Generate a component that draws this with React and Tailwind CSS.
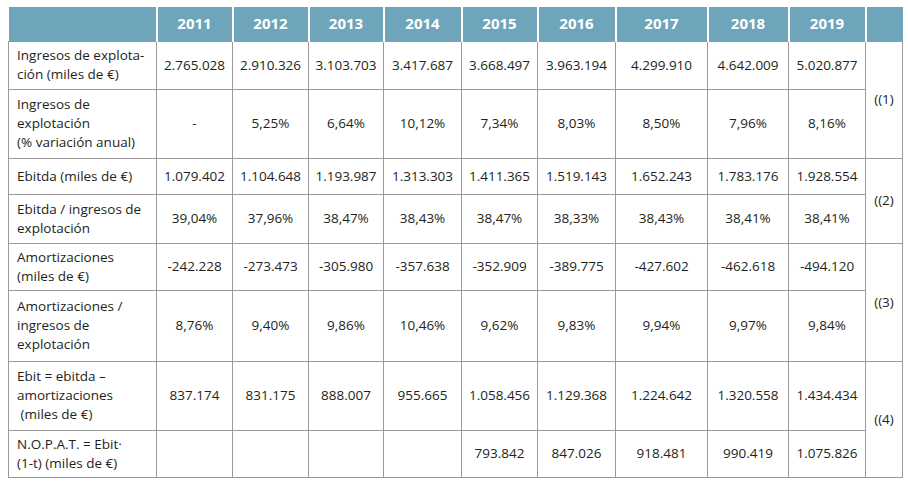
import React from 'react';

const years = ['2011', '2012', '2013', '2014', '2015', '2016', '2017', '2018', '2019'];
const colWidths = [148, 76, 76, 75, 78, 76, 78, 92, 81, 77, 37];

const rows = [
  { label: ['Ingresos de explota-', 'ción (miles de €)'], h: 48, note: '((1)', span: 2,
    values: ['2.765.028', '2.910.326', '3.103.703', '3.417.687', '3.668.497', '3.963.194', '4.299.910', '4.642.009', '5.020.877'] },
  { label: ['Ingresos de', 'explotación', '(% variación anual)'], h: 69,
    values: ['-', '5,25%', '6,64%', '10,12%', '7,34%', '8,03%', '8,50%', '7,96%', '8,16%'] },
  { label: ['Ebitda (miles de €)'], h: 36, note: '((2)', span: 2,
    values: ['1.079.402', '1.104.648', '1.193.987', '1.313.303', '1.411.365', '1.519.143', '1.652.243', '1.783.176', '1.928.554'] },
  { label: ['Ebitda / ingresos de', 'explotación'], h: 49,
    values: ['39,04%', '37,96%', '38,47%', '38,43%', '38,47%', '38,33%', '38,43%', '38,41%', '38,41%'] },
  { label: ['Amortizaciones', '(miles de €)'], h: 47, note: '((3)', span: 2,
    values: ['-242.228', '-273.473', '-305.980', '-357.638', '-352.909', '-389.775', '-427.602', '-462.618', '-494.120'] },
  { label: ['Amortizaciones /', 'ingresos de', 'explotación'], h: 71,
    values: ['8,76%', '9,40%', '9,86%', '10,46%', '9,62%', '9,83%', '9,94%', '9,97%', '9,84%'] },
  { label: ['Ebit = ebitda –', 'amortizaciones', '\u00a0(miles de €)'], h: 69, note: '((4)', span: 2,
    values: ['837.174', '831.175', '888.007', '955.665', '1.058.456', '1.129.368', '1.224.642', '1.320.558', '1.434.434'] },
  { label: ['N.O.P.A.T. = Ebit·', '(1-t) (miles de €)'], h: 47,
    values: ['', '', '', '', '793.842', '847.026', '918.481', '990.419', '1.075.826'] },
];

export default function App() {
  return (
    <div className="w-[908px] h-[481px] bg-white pt-[7px] pl-[8px] font-['Open_Sans',sans-serif] text-[13.5px] leading-[19px] text-[#231f20]">
      <table className="table-fixed border-collapse w-[894px]">
        <colgroup>
          {colWidths.map((w, i) => (
            <col key={i} style={{ width: w }} />
          ))}
        </colgroup>
        <thead>
          <tr className="h-[34px] bg-[#6fa5bb]">
            <th className="border-r-2 border-white" />
            {years.map((y) => (
              <th key={y} className="border-r-2 border-white text-white font-bold text-[15px] text-center align-middle">
                {y}
              </th>
            ))}
            <th />
          </tr>
        </thead>
        <tbody>
          {rows.map((row, i) => (
            <tr key={i} style={{ height: row.h }}>
              <td className="border border-[#9a9a9a] pl-[8px] pr-1 align-middle text-left">
                {row.label.map((l, j) => (
                  <div key={j}>{l}</div>
                ))}
              </td>
              {row.values.map((v, j) => (
                <td key={j} className="border border-[#9a9a9a] text-center align-middle whitespace-nowrap">
                  {v}
                </td>
              ))}
              {row.note && (
                <td rowSpan={row.span} className="border border-[#9a9a9a] text-center align-middle">
                  {row.note}
                </td>
              )}
            </tr>
          ))}
        </tbody>
      </table>
    </div>
  );
}
